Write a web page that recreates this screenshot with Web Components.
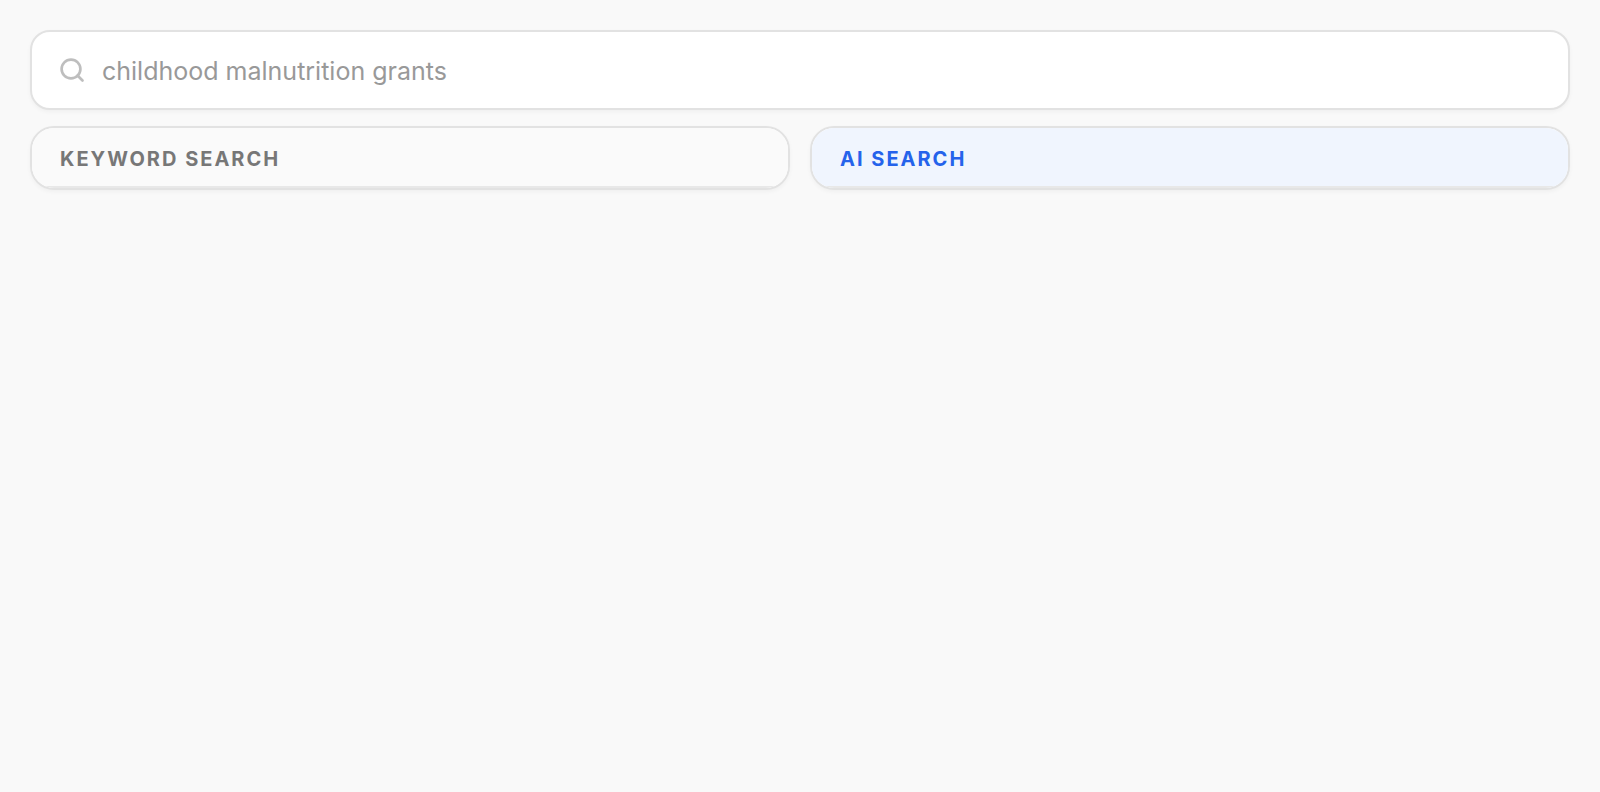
<!DOCTYPE html>
<html lang="en">
<head>
<meta charset="utf-8">
<meta name="viewport" content="width=device-width, initial-scale=1">
<title>Grant search</title>
<style>
  body { margin: 0; background: #f9f9f9; font-family: Inter, "Liberation Sans", sans-serif; }
</style>
</head>
<body>
<search-compare>
  <search-box slot="query" placeholder="childhood malnutrition grants"></search-box>
  <result-panel>Keyword search</result-panel>
  <result-panel variant="ai">AI search</result-panel>
</search-compare>

<template id="compare-tpl">
  <style>
    :host { display: flex; flex-direction: column; gap: 16px; padding: 30px; }
    .panels { display: grid; grid-template-columns: 1fr 1fr; gap: 20px; }
  </style>
  <slot name="query"></slot>
  <main class="panels"><slot></slot></main>
</template>

<template id="box-tpl">
  <style>
    :host { display: block; }
    label {
      display: flex; align-items: center; gap: 16px; padding: 22px 26px;
      background: #fff; border: 2px solid #e2e2e2; border-radius: 20px;
      box-shadow: 0 2px 4px rgba(0, 0, 0, .04);
    }
    svg { width: 28px; height: 28px; flex: none; }
    input {
      flex: 1; min-width: 0; height: 32px; padding: 2px 0 0; border: 0; outline: 0; box-sizing: border-box;
      background: none; font: 400 25px/30px Inter, "Liberation Sans", sans-serif; color: #333;
    }
    input::placeholder { color: #999; opacity: 1; }
  </style>
  <label>
    <svg viewBox="0 0 28 28" fill="none" stroke="#bebebe" stroke-width="2.7" stroke-linecap="round" aria-hidden="true">
      <circle cx="13" cy="13" r="9.4"/><path d="m24.5 24.5-5-5"/>
    </svg>
    <input type="search" aria-label="Search grants">
  </label>
</template>

<template id="panel-tpl">
  <style>
    :host {
      display: block; overflow: hidden; background: #fff;
      border: 2px solid #e2e2e2; border-radius: 24px;
      box-shadow: 0 2px 4px rgba(0, 0, 0, .04);
    }
    h2 {
      margin: 0; padding: 16px 28px 12px; background: #fafafa; color: #777;
      border-bottom: 2px solid #e8e8e8;
      font-size: 20px; line-height: 30px; font-weight: 700;
      letter-spacing: 2px; text-transform: uppercase;
    }
    :host([variant="ai"]) h2 { background: #f0f5fe; color: #2563eb; }
  </style>
  <h2><slot></slot></h2>
</template>

<script>
  const attach = (el, id) => {
    const root = el.attachShadow({ mode: "open" });
    root.append(document.getElementById(id).content.cloneNode(true));
    return root;
  };
  customElements.define("search-compare", class extends HTMLElement {
    constructor() { super(); attach(this, "compare-tpl"); }
  });
  customElements.define("search-box", class extends HTMLElement {
    constructor() { super(); attach(this, "box-tpl"); }
    connectedCallback() {
      this.shadowRoot.querySelector("input").placeholder = this.getAttribute("placeholder") || "";
    }
  });
  customElements.define("result-panel", class extends HTMLElement {
    constructor() { super(); attach(this, "panel-tpl"); }
  });
</script>
</body>
</html>
